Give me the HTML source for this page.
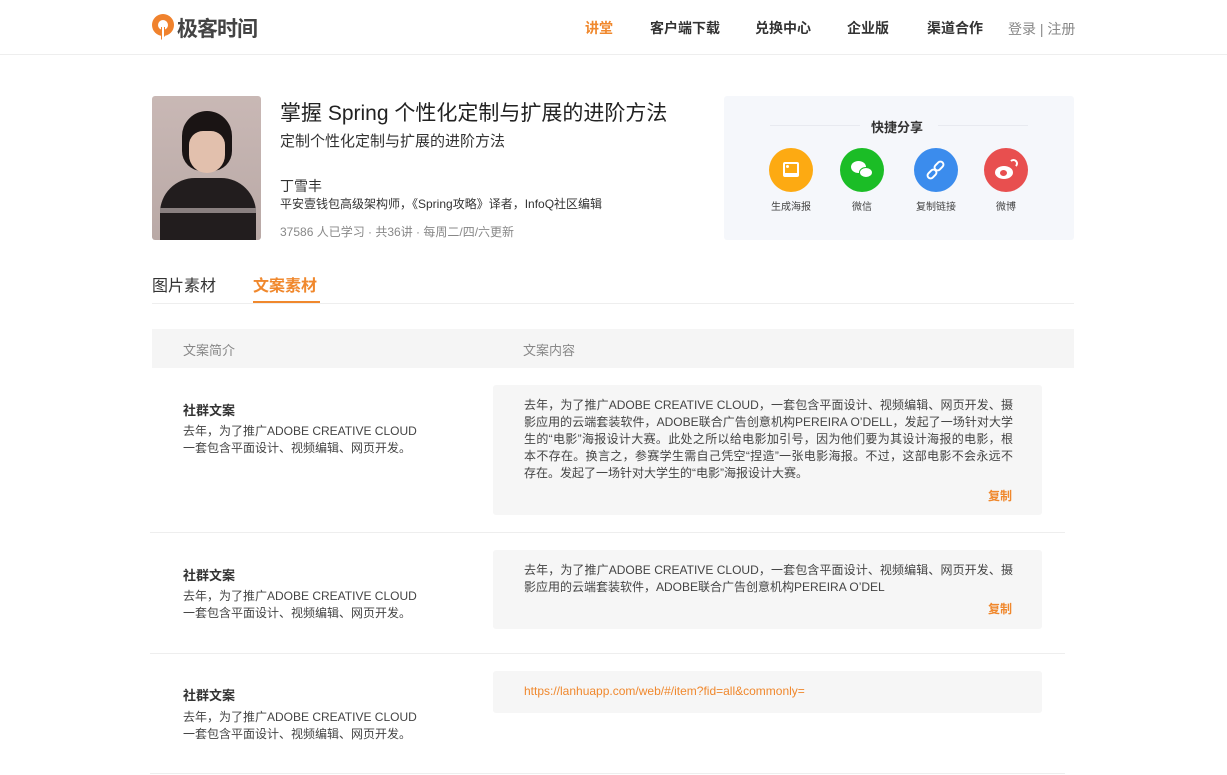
<!DOCTYPE html>
<html><head><meta charset="utf-8">
<style>
*{margin:0;padding:0;box-sizing:border-box}
body{width:1227px;height:775px;background:#fff;font-family:"Liberation Sans","Noto Sans CJK SC",sans-serif;color:#333;position:relative;overflow:hidden}
.a{position:absolute;white-space:nowrap}
.hdr{position:absolute;left:0;top:0;width:1227px;height:55px;border-bottom:1px solid #eee;}
.nav{font-size:14px;color:#333;top:18px;font-weight:bold}
.circle{position:absolute;width:44px;height:44px;border-radius:50%;top:148px}
.lbl{font-size:10px;color:#444;top:198px;width:70px;text-align:center}
.box{position:absolute;left:493px;width:549px;background:#f6f6f6;border-radius:3px}
.txt{font-size:12px;line-height:17px;color:#444;position:absolute;left:31px;width:489px}
.txt div{text-align:justify;text-align-last:justify;height:17px}
.txt div.l{text-align-last:left}
.copy{position:absolute;right:30px;font-size:12px;color:#f0882d;font-weight:bold}
.lt{font-size:13px;font-weight:bold;color:#333;left:183px}
.ld{font-size:12px;line-height:17px;color:#444;left:183px}
.sep{position:absolute;left:150px;width:915px;height:1px;background:#eee}
</style></head><body>
<div class="hdr"></div>
<svg class="a" style="left:151px;top:13px" width="24" height="28" viewBox="0 0 24 28"><circle cx="12" cy="12" r="11" fill="#f0822d"/><circle cx="12" cy="12" r="5" fill="#fff"/><path d="M10 14 L10 27 L14 23 L14 14Z" fill="#f0822d"/><path d="M12 14 L12 26" stroke="#fff" stroke-width="2"/></svg>
<div class="a" style="left:177px;top:13px;font-size:21px;font-weight:bold;color:#444;letter-spacing:-1px">极客时间</div>
<div class="a nav" style="left:585px;color:#f0882d">讲堂</div>
<div class="a nav" style="left:650px">客户端下载</div>
<div class="a nav" style="left:755px">兑换中心</div>
<div class="a nav" style="left:847px">企业版</div>
<div class="a nav" style="left:927px">渠道合作</div>
<div class="a" style="left:1008px;top:19px;font-size:14px;color:#888">登录 | 注册</div>

<div class="a" style="left:152px;top:96px;width:109px;height:144px;border-radius:3px;background:linear-gradient(#c9b8b5,#b9a9a6);overflow:hidden">
<div style="position:absolute;left:30px;top:15px;width:50px;height:60px;border-radius:25px 25px 20px 20px;background:#1a1414"></div>
<div style="position:absolute;left:37px;top:35px;width:36px;height:42px;border-radius:14px 14px 18px 18px;background:#e2c0ad"></div>
<div style="position:absolute;left:8px;top:82px;width:96px;height:70px;border-radius:35px 35px 0 0;background:#221d1e"></div>
<div style="position:absolute;left:8px;top:112px;width:96px;height:5px;background:#8a8080"></div>
</div>
<div class="a" style="left:280px;top:97px;font-size:21px;color:#222">掌握 Spring 个性化定制与扩展的进阶方法</div>
<div class="a" style="left:280px;top:130px;font-size:15px;color:#333">定制个性化定制与扩展的进阶方法</div>
<div class="a" style="left:280px;top:176px;font-size:14px;color:#333">丁雪丰</div>
<div class="a" style="left:280px;top:195px;font-size:12px;color:#333">平安壹钱包高级架构师，《Spring攻略》译者，InfoQ社区编辑</div>
<div class="a" style="left:280px;top:223px;font-size:12px;color:#888">37586 人已学习 · 共36讲 · 每周二/四/六更新</div>

<div class="a" style="left:724px;top:96px;width:350px;height:144px;background:#f5f7fb;border-radius:3px"></div>
<div class="a" style="left:770px;top:125px;width:90px;height:1px;background:#e8eaf0"></div>
<div class="a" style="left:938px;top:125px;width:90px;height:1px;background:#e8eaf0"></div>
<div class="a" style="left:871px;top:117px;font-size:13px;font-weight:bold;color:#333">快捷分享</div>
<div class="circle" style="left:769px;background:#fdaa12"><div style="position:absolute;left:14px;top:14px;width:16px;height:15px;background:#fff;border-radius:2px"><div style="position:absolute;left:2px;top:2px;width:12px;height:9px;background:#fdaa12"></div><div style="position:absolute;left:3px;top:3px;width:3px;height:3px;border-radius:50%;background:#fff"></div></div></div>
<div class="circle" style="left:840px;background:#1bbd26"><div style="position:absolute;left:11px;top:13px;width:15px;height:12px;border-radius:50%;background:#fff"></div><div style="position:absolute;left:19px;top:19px;width:14px;height:11px;border-radius:50%;background:#fff;border:1px solid #1bbd26"></div></div>
<div class="circle" style="left:914px;background:#3b8ced"><svg style="position:absolute;left:12px;top:12px" width="20" height="20" viewBox="0 0 20 20" fill="none" stroke="#fff" stroke-width="2"><rect x="3" y="9" width="6" height="10" rx="3" transform="rotate(45 6 14)"/><rect x="10" y="1" width="6" height="10" rx="3" transform="rotate(45 13 6)"/></svg></div>
<div class="circle" style="left:984px;background:#e84f4f"><div style="position:absolute;left:11px;top:18px;width:18px;height:13px;border-radius:50%;background:#fff"></div><div style="position:absolute;left:16px;top:22px;width:7px;height:6px;border-radius:50%;background:#e84f4f"></div><div style="position:absolute;left:25px;top:11px;width:9px;height:9px;border:2px solid #fff;border-left-color:transparent;border-bottom-color:transparent;border-radius:50%"></div></div>
<div class="a lbl" style="left:756px">生成海报</div>
<div class="a lbl" style="left:827px">微信</div>
<div class="a lbl" style="left:901px">复制链接</div>
<div class="a lbl" style="left:971px">微博</div>

<div class="a" style="left:152px;top:272px;font-size:16px;color:#333">图片素材</div>
<div class="a" style="left:253px;top:272px;font-size:16px;color:#f0882d;font-weight:bold">文案素材</div>
<div class="a" style="left:152px;top:303px;width:922px;height:1px;background:#eee"></div>
<div class="a" style="left:253px;top:301px;width:67px;height:2px;background:#f0882d"></div>

<div class="a" style="left:152px;top:329px;width:922px;height:39px;background:#f5f5f5"></div>
<div class="a" style="left:183px;top:340px;font-size:13px;color:#888">文案简介</div>
<div class="a" style="left:523px;top:340px;font-size:13px;color:#888">文案内容</div>

<div class="a lt" style="top:400px">社群文案</div>
<div class="a ld" style="top:423px">去年，为了推广ADOBE CREATIVE CLOUD<br>一套包含平面设计、视频编辑、网页开发。</div>
<div class="box" style="top:385px;height:130px">
<div class="txt" style="top:12px">
<div>去年，为了推广ADOBE CREATIVE CLOUD，一套包含平面设计、视频编辑、网页开发、摄</div>
<div>影应用的云端套装软件，ADOBE联合广告创意机构PEREIRA O’DELL，发起了一场针对大学</div>
<div>生的“电影”海报设计大赛。此处之所以给电影加引号，因为他们要为其设计海报的电影，根</div>
<div>本不存在。换言之，参赛学生需自己凭空“捏造”一张电影海报。不过，这部电影不会永远不</div>
<div class="l">存在。发起了一场针对大学生的“电影”海报设计大赛。</div>
</div>
<div class="copy" style="top:102px">复制</div>
</div>
<div class="sep" style="top:532px"></div>

<div class="a lt" style="top:565px">社群文案</div>
<div class="a ld" style="top:588px">去年，为了推广ADOBE CREATIVE CLOUD<br>一套包含平面设计、视频编辑、网页开发。</div>
<div class="box" style="top:550px;height:79px">
<div class="txt" style="top:12px">
<div>去年，为了推广ADOBE CREATIVE CLOUD，一套包含平面设计、视频编辑、网页开发、摄</div>
<div class="l">影应用的云端套装软件，ADOBE联合广告创意机构PEREIRA O’DEL</div>
</div>
<div class="copy" style="top:50px">复制</div>
</div>
<div class="sep" style="top:653px"></div>

<div class="a lt" style="top:685px">社群文案</div>
<div class="a ld" style="top:709px">去年，为了推广ADOBE CREATIVE CLOUD<br>一套包含平面设计、视频编辑、网页开发。</div>
<div class="box" style="top:671px;height:42px">
<div class="a" style="left:31px;top:13px;font-size:12px;color:#f0882d">https://lanhuapp.com/web/#/item?fid=all&amp;commonly=</div>
</div>
<div class="sep" style="top:773px"></div>
</body></html>
